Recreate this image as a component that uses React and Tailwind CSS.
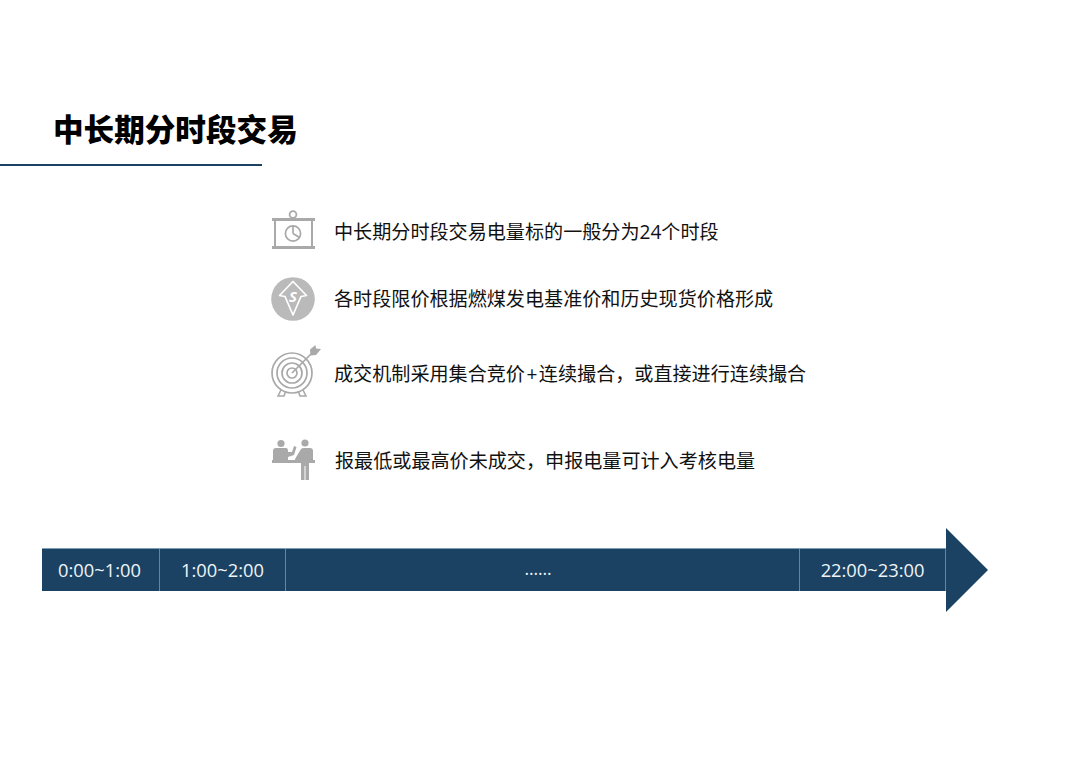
import React from 'react';

const GRAY = '#a9a9a9';

const BoardIcon = () => (
    <svg width="50" height="44" viewBox="0 0 50 44" fill="none">
        <circle cx="23" cy="4.5" r="3.4" stroke={GRAY} strokeWidth="1.8" />
        <path d="M2 9.5H45M2 37.5H45" stroke={GRAY} strokeWidth="3" />
        <path d="M5 9.5V37.5M42 9.5V37.5" stroke={GRAY} strokeWidth="2" />
        <circle cx="23" cy="23.5" r="7.6" stroke={GRAY} strokeWidth="1.7" />
        <path d="M23 23.5V16M23 23.5L29.5 27.5" stroke={GRAY} strokeWidth="1.7" />
    </svg>
);

const PriceIcon = () => (
    <svg width="50" height="44" viewBox="0 0 50 44" fill="none">
        <circle cx="23" cy="22" r="21.8" fill="#bababa" />
        <path d="M23 4.5L9.5 18.5L15 19.5L23 38L31 19.5L36.5 18.5Z" stroke="#fff" strokeWidth="1.7" strokeLinejoin="round" />
        <text x="23" y="25" textAnchor="middle" fontSize="15" fontWeight="700" fontStyle="italic" fill="#fff" fontFamily="'Open Sans', sans-serif">S</text>
    </svg>
);

const TargetIcon = () => (
    <svg width="52" height="52" viewBox="0 0 52 52" fill="none">
        <circle cx="22" cy="28" r="20" stroke={GRAY} strokeWidth="1.7" />
        <circle cx="22" cy="28" r="15" stroke={GRAY} strokeWidth="1.7" />
        <circle cx="22" cy="28" r="10" stroke={GRAY} strokeWidth="1.7" />
        <circle cx="22" cy="28" r="5" stroke={GRAY} strokeWidth="1.7" />
        <path d="M22 28L43 7" stroke={GRAY} strokeWidth="1.7" />
        <path d="M40 4.5L45.5 0L46 3.5L51 4L46 10L40.5 10.5Z" fill={GRAY} />
        <path d="M11 45L8 51H14L15.5 46.5M33 45L36 51H30L28.5 46.5" stroke={GRAY} strokeWidth="1.6" />
    </svg>
);

const MeetingIcon = () => (
    <svg width="50" height="46" viewBox="0 0 50 46" fill="none">
        <circle cx="11" cy="6.5" r="3.6" fill={GRAY} />
        <circle cx="35" cy="6" r="3.6" fill={GRAY} />
        <path d="M3 23V14Q3 11 6 11H16Q18 11 18 14V23Z" fill={GRAY} />
        <path d="M18 15L22 15L24 9L26.5 10L24 18L18 20Z" fill={GRAY} />
        <path d="M25 22L31 12Q32 11 34 11H40Q43 11 43 14V23H25Z" fill={GRAY} />
        <rect x="2" y="23" width="43" height="3" fill={GRAY} />
        <path d="M31 26H39V43H35.5V29H34.5V43H31Z" fill={GRAY} />
    </svg>
);

const ROWS = [
    { icon: <BoardIcon />, text: '中长期分时段交易电量标的一般分为24个时段', cls: 'mt-[44px] h-[44px]', textCls: '' },
    { icon: <PriceIcon />, text: '各时段限价根据燃煤发电基准价和历史现货价格形成', cls: 'mt-[23px] h-[44px]', textCls: '' },
    {
        icon: <TargetIcon />,
        text: <>成交机制采用集合竞价<span className="mx-[1.5px]">+</span>连续撮合，或直接进行连续撮合</>,
        cls: 'mt-[24px] h-[52px]',
        textCls: 'mt-[6px]',
    },
    { icon: <MeetingIcon />, text: '报最低或最高价未成交，申报电量可计入考核电量', cls: 'mt-[40px] h-[46px]', textCls: 'ml-[1px] mt-[2px]' },
];

const Divider = () => <div className="w-[1px] shrink-0 bg-[#8f7f48]"></div>;

const App = () => (
    <div className="w-[1080px] h-[764px] bg-white overflow-hidden font-['Open_Sans','Noto_Sans_CJK_SC',sans-serif]">
        <h1 className="pt-[108px] pl-[53px] text-[30.6px] leading-[42px] font-black text-black">中长期分时段交易</h1>
        <div className="mt-[14px] w-[262px] h-[2px] bg-[#1c4263]"></div>

        <div className="pl-[270px]">
            {ROWS.map((row, i) => (
                <div key={i} className={`flex items-center ${row.cls}`}>
                    <div className="w-[64px] shrink-0">{row.icon}</div>
                    <p className={`text-[19.1px] leading-[26px] text-[#111] whitespace-nowrap ${row.textCls}`}>{row.text}</p>
                </div>
            ))}
        </div>

        <div className="mt-[45px] ml-[42px] flex items-center h-[84px]">
            <div className="w-[904px] h-[43px] mb-[2px] flex items-stretch bg-[#1c4263] border-t border-t-[#7f9db3] text-[#eef4f8] text-[18.3px]">
                <div className="w-[117px] pr-[2px] flex items-center justify-center">0:00~1:00</div>
                <Divider />
                <div className="w-[125px] flex items-center justify-center">1:00~2:00</div>
                <Divider />
                <div className="w-[513px] pr-[9px] pb-[3px] flex items-center justify-center text-[17.5px]">……</div>
                <Divider />
                <div className="flex-1 flex items-center justify-center">22:00~23:00</div>
                <Divider />
            </div>
            <svg width="42" height="84" viewBox="0 0 42 84" className="shrink-0">
                <path d="M0 0L42 42L0 84Z" fill="#1c4263" />
            </svg>
        </div>
    </div>
);

export default App;
